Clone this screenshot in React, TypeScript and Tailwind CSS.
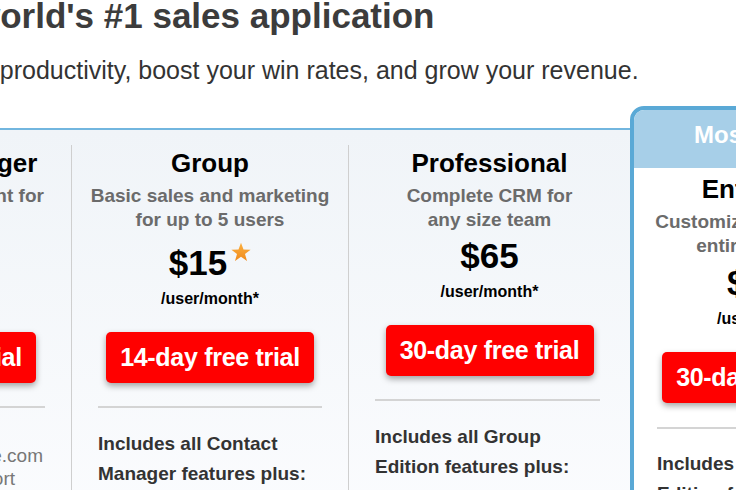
import React from "react";

type Plan = {
  name: string;
  sub: string[];
  price: string;
  star?: boolean;
  trial: string;
  includes: string[];
  width: string;
  priceGap: string;
  rule: string;
  divider: boolean;
};

const PLANS: Plan[] = [
  {
    name: "Contact Manager",
    sub: ["Contact management for", "up to 5 users"],
    price: "$5",
    trial: "14-day free trial",
    includes: [],
    width: "w-[278px]",
    priceGap: "mt-[11px]",
    rule: "ml-[26px] mr-[26px]",
    divider: false,
  },
  {
    name: "Group",
    sub: ["Basic sales and marketing", "for up to 5 users"],
    price: "$15",
    star: true,
    trial: "14-day free trial",
    includes: ["Includes all Contact", "Manager features plus:"],
    width: "w-[277px]",
    priceGap: "mt-[11px]",
    rule: "ml-[26px] mr-[26px]",
    divider: true,
  },
  {
    name: "Professional",
    sub: ["Complete CRM for", "any size team"],
    price: "$65",
    trial: "30-day free trial",
    includes: ["Includes all Group", "Edition features plus:"],
    width: "w-[282px]",
    priceGap: "mt-[4px]",
    rule: "ml-[26px] mr-[30px]",
    divider: true,
  },
];

const Star = () => (
  <svg width="20" height="20" viewBox="0 0 24 24" className="ml-[4px] -mt-[1px]">
    <defs>
      <linearGradient id="st" x1="0" y1="0" x2="0" y2="1">
        <stop offset="0" stopColor="#fbb040" />
        <stop offset="1" stopColor="#f08a1c" />
      </linearGradient>
    </defs>
    <polygon
      points="12,1 15,9 23.5,9.2 16.8,14.4 19.2,22.8 12,17.8 4.8,22.8 7.2,14.4 0.5,9.2 9,9"
      fill="url(#st)"
    />
  </svg>
);

const TrialButton = ({ label }: { label: string }) => (
  <button className="w-[208px] h-[51px] rounded-[5px] bg-[#ff0000] text-white text-[25px] font-bold tracking-[-0.3px] shadow-[0_3px_6px_rgba(0,0,0,0.35)]">
    {label}
  </button>
);

function PlanColumn({ p }: { p: Plan }) {
  return (
    <div
      className={`${p.width} flex flex-col items-center pt-[3px] ${
        p.divider ? "border-l border-[#cfcfcf]" : ""
      }`}
    >
      <h2 className="text-[26px] leading-[30px] font-bold text-black whitespace-nowrap">{p.name}</h2>
      <p className="mt-[6px] text-[19px] leading-[24px] font-bold text-[#6b6b6b] text-center whitespace-nowrap">
        {p.sub[0]}
        <br />
        {p.sub[1]}
      </p>
      <div className={`${p.priceGap} flex items-start text-[35px] leading-[40px] font-bold text-black`}>
        {p.price}
        {p.star && <Star />}
      </div>
      <div className="mt-[6px] text-[16px] leading-[20px] font-bold text-black">/user/month*</div>
      <div className="mt-[23px]">
        <TrialButton label={p.trial} />
      </div>
      <div className={`mt-[23px] self-stretch ${p.rule} h-[2px] bg-[#d4d4d4]`} />
      {p.includes.length > 0 ? (
        <p className="mt-[21px] self-stretch px-[26px] text-[19px] leading-[30px] font-bold text-[#333]">
          {p.includes[0]}
          <br />
          {p.includes[1]}
        </p>
      ) : (
        <div className="mt-[36px] self-stretch text-[19px] leading-[23px] text-[#777] text-right whitespace-nowrap">
          <div className="pr-[28px]">Salesforce.com</div>
          <div className="pr-[56px]">Community support</div>
        </div>
      )}
    </div>
  );
}

export default function App() {
  return (
    <div className="w-[736px] h-[490px] overflow-hidden bg-white font-['Liberation_Sans',Arial,sans-serif]">
      <h1 className="-mt-[4px] -ml-[99px] text-[35px] leading-[40px] font-bold text-[#3c3c3c] whitespace-nowrap">
        The world's #1 sales application
      </h1>
      <p className="mt-[20px] -ml-[103px] text-[25px] leading-[28px] text-[#333] whitespace-nowrap">
        Increase productivity, boost your win rates, and grow your revenue.
      </p>

      <div className="mt-[44px] flex items-start">
        <div className="-ml-[207px] flex h-[400px] shrink-0 border-t-2 border-[#72b6df] bg-linear-to-b from-[#f0f4f8] to-[#fbfcfe] pt-[15px]">
          {PLANS.map(p => (
            <PlanColumn key={p.name} p={p} />
          ))}
        </div>

        {/* Enterprise – highlighted card */}
        <div className="-mt-[22px] w-[272px] h-[420px] shrink-0 overflow-hidden rounded-t-[14px] border-4 border-[#5aa9d6] bg-white">
          <div className="h-[58px] pt-[11px] pl-[8px] bg-[#a7cfe8] text-center text-[24px] leading-[28px] font-bold text-white">
            Most Popular
          </div>
          <div className="flex flex-col items-center pt-[6px]">
            <h2 className="text-[26px] leading-[30px] font-bold text-black">Enterprise</h2>
            <p className="mt-[6px] text-[19px] leading-[24px] font-bold text-[#6b6b6b] text-center whitespace-nowrap">
              Customize CRM for your
              <br />
              entire business
            </p>
            <div className="mt-[5px] text-[35px] leading-[40px] font-bold text-black">$125</div>
            <div className="mt-[6px] text-[16px] leading-[20px] font-bold text-black">/user/month*</div>
            <div className="mt-[23px]">
              <TrialButton label="30-day free trial" />
            </div>
            <div className="mt-[24px] self-stretch mx-[23px] h-[2px] bg-[#d4d4d4]" />
            <p className="mt-[20px] self-stretch px-[23px] text-[19px] leading-[30px] font-bold text-[#333] whitespace-nowrap">
              Includes all Professional
              <br />
              Edition features plus:
            </p>
          </div>
        </div>
      </div>
    </div>
  );
}
